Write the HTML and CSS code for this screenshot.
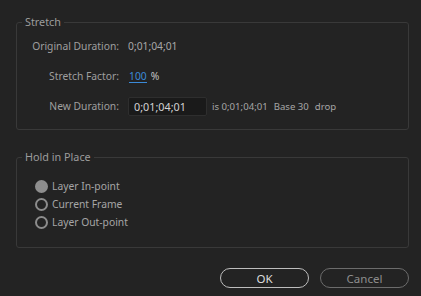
FILE: index.html
```html
<!DOCTYPE html>
<html lang="en">

<head>
    <meta charset="UTF-8">
    <title>Time Stretch</title>
    <link rel="stylesheet" href="styles.css">
</head>

<body>
    <div class="dialog">
        <fieldset class="group stretch">
            <legend>Stretch</legend>
            <div class="stretch-grid">
                <span class="label">Original Duration:</span>
                <span class="value">0;01;04;01</span>

                <span class="label">Stretch Factor:</span>
                <span class="value"><span class="scrub">100</span> <span class="unit">%</span></span>

                <span class="label">New Duration:</span>
                <span class="value">
                    <input class="time-input" type="text" value="0;01;04;01">
                    <span class="info">is 0;01;04;01<span class="sep">Base 30</span><span class="sep">drop</span></span>
                </span>
            </div>
        </fieldset>

        <fieldset class="group hold">
            <legend>Hold in Place</legend>
            <div class="radio-list">
                <label class="radio"><span class="dot checked"></span>Layer In-point</label>
                <label class="radio"><span class="dot"></span>Current Frame</label>
                <label class="radio"><span class="dot"></span>Layer Out-point</label>
            </div>
        </fieldset>

        <div class="buttons">
            <button class="btn primary">OK</button>
            <button class="btn">Cancel</button>
        </div>
    </div>
</body>

</html>
```

FILE: styles.css
```css
* {
    margin: 0;
    padding: 0;
    box-sizing: border-box;
}

body {
    width: 421px;
    height: 296px;
    background: #232323;
    font-family: "Noto Sans", "Open Sans", sans-serif;
    font-size: 10.3px;
    color: #a3a3a3;
    overflow: hidden;
}

.dialog {
    padding: 15px 12px 0 16px;
}

.group {
    border: 1px solid #393939;
    border-radius: 3px;
}

.group legend {
    margin-left: 5px;
    padding: 0 3px;
    line-height: 14px;
    font-size: 10.8px;
    color: #9c9c9c;
}

.stretch {
    padding: 7px 0 13px;
}

.stretch-grid {
    display: grid;
    grid-template-columns: 102px auto;
    column-gap: 9px;
    row-gap: 10px;
    align-items: center;
}

.stretch-grid > span {
    height: 20px;
    display: flex;
    align-items: center;
}

.label {
    justify-content: flex-end;
    color: #9f9f9f;
}

.value {
    color: #a8a8a8;
}

.scrub {
    color: #3b8ad8;
    border-bottom: 1px solid #3b8ad8;
    line-height: 12px;
    margin-left: 1px;
    margin-right: 4px;
}

.unit {
    color: #c4c4c4;
}

.time-input {
    width: 79px;
    height: 19px;
    background: #1a1a1a;
    border: 1px solid #2e2e2e;
    border-radius: 2px;
    color: #d2d2d2;
    font-family: inherit;
    font-size: 10.8px;
    padding: 0 5px;
    outline: none;
}

.info {
    margin-left: 5px;
    font-size: 9.6px;
    color: #a6a6a6;
}

.sep {
    margin-left: 6px;
}

.hold {
    margin-top: 20px;
    padding: 13px 0 16px;
}

.radio-list {
    padding-left: 18px;
}

.radio {
    display: flex;
    align-items: center;
    height: 18px;
    color: #a6a6a6;
}

.dot {
    width: 13px;
    height: 13px;
    border: 2px solid #8c8c8c;
    border-radius: 50%;
    margin-right: 4px;
}

.dot.checked {
    background: #8e8e8e;
    border-color: #8e8e8e;
}

.buttons {
    display: flex;
    justify-content: flex-end;
    gap: 11px;
    margin-top: 20px;
}

.btn {
    width: 89px;
    height: 20px;
    border-radius: 10px;
    background: transparent;
    border: 1.5px solid #6c6c6c;
    color: #8e8e8e;
    font-family: inherit;
    font-size: 11.5px;
}

.btn.primary {
    border-color: #bdbdbd;
    color: #dedede;
}
```
